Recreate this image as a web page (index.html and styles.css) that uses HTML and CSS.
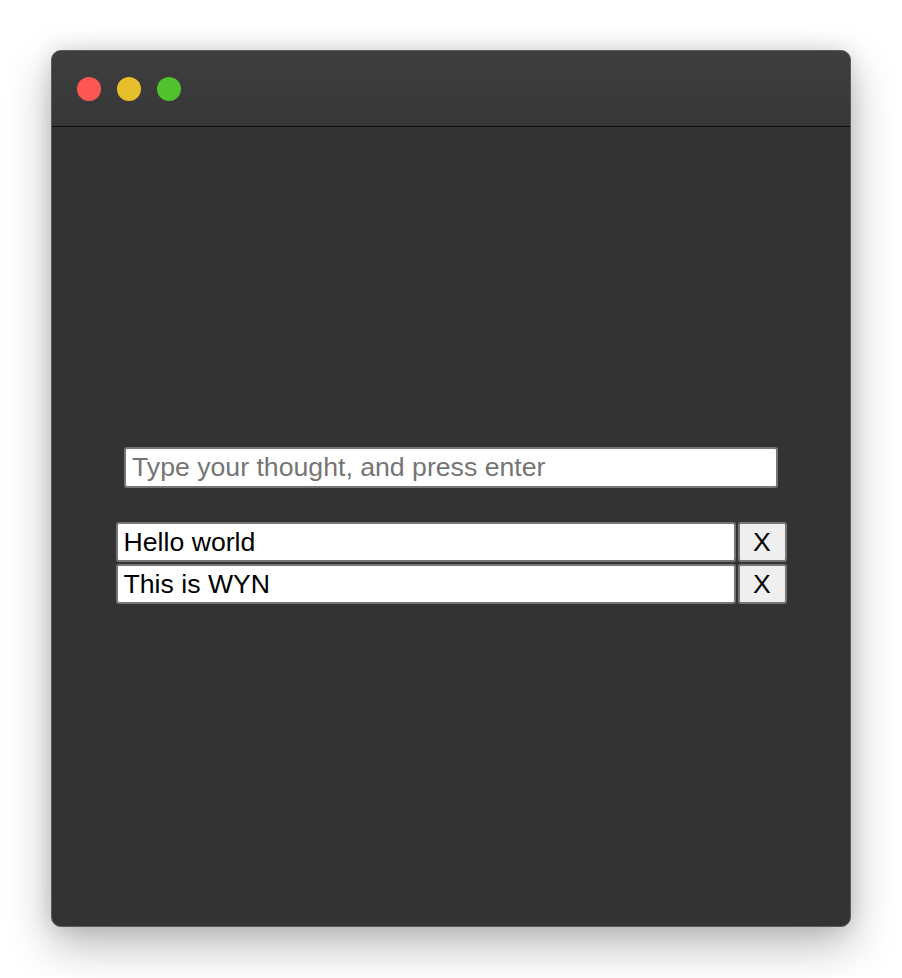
FILE: index.html
```html
<!DOCTYPE html>
<html>
<head>
<meta charset="utf-8">
<link rel="stylesheet" href="styles.css">
</head>
<body>
<div class="stage">
  <div class="window">
    <div class="titlebar">
      <span class="light red"></span>
      <span class="light yellow"></span>
      <span class="light green"></span>
    </div>
    <div class="content">
      <input class="new-thought" type="text" placeholder="Type your thought, and press enter">
      <div class="list">
        <div class="row">
          <input class="item" type="text" value="Hello world">
          <button class="remove">X</button>
        </div>
        <div class="row">
          <input class="item" type="text" value="This is WYN">
          <button class="remove">X</button>
        </div>
      </div>
    </div>
  </div>
</div>
</body>
</html>
```

FILE: styles.css
```css
html, body {
  margin: 0;
  padding: 0;
  background: #ffffff;
}
.stage {
  padding: 50px 51px;
}
.window {
  width: 800px;
  height: 877px;
  box-sizing: border-box;
  border: 1px solid #5c5c5c;
  border-radius: 10px;
  background: #333333;
  box-shadow: 0 18px 45px rgba(0, 0, 0, 0.28), 0 0 20px rgba(0, 0, 0, 0.12);
  overflow: hidden;
  display: flex;
  flex-direction: column;
}
.titlebar {
  height: 75px;
  flex: none;
  border-bottom: 1px solid #0a0a0a;
  background: linear-gradient(#3e3e3e, #373737);
  display: flex;
  align-items: center;
  gap: 16px;
  padding-left: 25px;
  box-sizing: content-box;
}
.light {
  width: 24px;
  height: 24px;
  border-radius: 50%;
  display: block;
}
.red { background: #fe5652; }
.yellow { background: #e7be2b; }
.green { background: #52c12e; }
.content {
  flex: 1;
  display: flex;
  flex-direction: column;
  align-items: center;
  padding-top: 320px;
}
input, button {
  font-family: "Liberation Sans", Arial, sans-serif;
  font-size: 26.67px;
  color: #000;
  box-sizing: border-box;
  border: 2px solid #767676;
  border-radius: 3px;
  margin: 0;
  outline: none;
}
.new-thought {
  width: 654px;
  height: 41px;
  padding: 0 6px;
  background: #fff;
}
.new-thought::placeholder {
  color: #757575;
}
.list {
  margin-top: 34px;
  display: flex;
  flex-direction: column;
  gap: 2px;
}
.row {
  display: flex;
  gap: 2px;
}
.item {
  width: 620px;
  height: 40px;
  padding: 0 6px;
  background: #fff;
}
.remove {
  width: 49px;
  height: 40px;
  padding: 0;
  background: #efefef;
  text-align: center;
}
```
